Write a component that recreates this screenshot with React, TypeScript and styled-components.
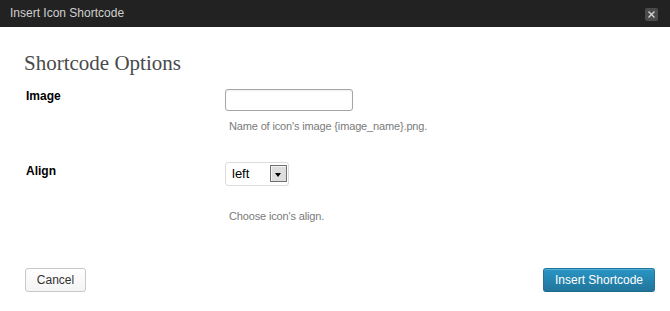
import React from 'react';
import styled, { createGlobalStyle } from 'styled-components';

const GlobalStyle = createGlobalStyle`
  html, body {
    margin: 0;
    padding: 0;
    background: #fff;
  }
  body {
    font-family: "Liberation Sans", Arial, sans-serif;
    color: #333;
  }
`;

const App: React.FC = () => {
    return (
        <>
            <GlobalStyle />
            <Dialog>
                <TitleBar>
                    <Title>Insert Icon Shortcode</Title>
                    <CloseButton aria-label="Close">
                        <svg width="7" height="7" viewBox="0 0 7 7">
                            <path d="M0.5 0.5 L6.5 6.5 M6.5 0.5 L0.5 6.5" stroke="#d4d4d4" strokeWidth="1.4" />
                        </svg>
                    </CloseButton>
                </TitleBar>

                <Content>
                    <Heading>Shortcode Options</Heading>

                    <FieldRow $top={14}>
                        <Label $offset={0}>Image</Label>
                        <Field>
                            <TextInput type="text" />
                            <Description $top={8}>Name of icon's image {'{image_name}'}.png.</Description>
                        </Field>
                    </FieldRow>

                    <FieldRow $top={29}>
                        <Label $offset={2}>Align</Label>
                        <Field>
                            <Select>
                                <SelectValue>left</SelectValue>
                                <SelectArrow />
                            </Select>
                            <Description $top={23}>Choose icon's align.</Description>
                        </Field>
                    </FieldRow>
                </Content>

                <Footer>
                    <Button>Cancel</Button>
                    <PrimaryButton>Insert Shortcode</PrimaryButton>
                </Footer>
            </Dialog>
        </>
    );
};

// Styled Components
const Dialog = styled.div`
  width: 670px;
  height: 311px;
  background: #fff;
  display: flex;
  flex-direction: column;
`;

const TitleBar = styled.div`
  height: 27px;
  background: #222;
  display: flex;
  align-items: center;
  justify-content: space-between;
  padding: 0 12px 0 10px;
`;

const Title = styled.div`
  font-size: 12px;
  line-height: 27px;
  color: #cfcfcf;
`;

const CloseButton = styled.div`
  width: 13px;
  height: 13px;
  margin-top: 1px;
  border-radius: 2px;
  background: #4b4b4b;
  display: flex;
  align-items: center;
  justify-content: center;
`;

const Content = styled.div`
  padding: 0 15px 0 24px;
`;

const Heading = styled.h2`
  margin: 24px 0 0;
  font-family: "Liberation Serif", Georgia, serif;
  font-size: 21px;
  line-height: 24px;
  font-weight: normal;
  color: #4a4a4a;
`;

const FieldRow = styled.div<{ $top: number }>`
  display: grid;
  grid-template-columns: 201px 1fr;
  margin-top: ${p => p.$top}px;
`;

const Label = styled.div<{ $offset: number }>`
  padding-left: 2px;
  margin-top: ${p => p.$offset}px;
  font-size: 12px;
  line-height: 14px;
  font-weight: bold;
  color: #000;
`;

const Field = styled.div`
  display: flex;
  flex-direction: column;
  align-items: flex-start;
`;

const TextInput = styled.input`
  box-sizing: border-box;
  width: 128px;
  height: 22px;
  margin: 0;
  padding: 2px 4px;
  border: 1px solid #a5a5a5;
  border-radius: 3px;
  background: #fff;
  box-shadow: inset 0 1px 2px rgba(0,0,0,0.07);
  font-family: inherit;
  font-size: 12px;
  outline: none;
`;

const Description = styled.div<{ $top: number }>`
  margin-top: ${p => p.$top}px;
  padding-left: 4px;
  font-size: 11px;
  line-height: 14px;
  letter-spacing: -0.15px;
  color: #7a7a7a;
`;

const Select = styled.div`
  box-sizing: border-box;
  width: 64px;
  height: 24px;
  border: 1px solid #dcdcdc;
  border-radius: 3px;
  background: #fff;
  display: flex;
  align-items: center;
  justify-content: space-between;
  padding: 0 1px 1px 6px;
`;

const SelectValue = styled.span`
  font-size: 13px;
  color: #000;
`;

const SelectArrow = styled.span`
  position: relative;
  box-sizing: border-box;
  width: 17px;
  height: 17px;
  border: 1px solid #707070;
  background: #dedede;
  box-shadow: inset 1px 1px 0 #f4f4f4;

  &::after {
    content: '';
    position: absolute;
    left: 4px;
    top: 7px;
    border-left: 3.5px solid transparent;
    border-right: 3.5px solid transparent;
    border-top: 4px solid #000;
  }
`;

const Footer = styled.div`
  margin-top: auto;
  padding: 0 15px 19px 25px;
  display: flex;
  justify-content: space-between;
  align-items: center;
`;

const Button = styled.button`
  box-sizing: border-box;
  height: 24px;
  width: 61px;
  padding: 0 10px;
  border: 1px solid #c8c8c8;
  border-radius: 3px;
  background: linear-gradient(to bottom, #fefefe, #f4f4f4);
  font-family: "Liberation Sans", Arial, sans-serif;
  font-size: 12px;
  color: #333;
  cursor: pointer;
`;

const PrimaryButton = styled(Button)`
  width: 112px;
  border-color: #21759b;
  border-bottom-color: #1e6a8d;
  background: linear-gradient(to bottom, #2a95c5, #21759b);
  box-shadow: inset 0 1px 0 rgba(120,200,230,0.5);
  color: #fff;
`;

export default App;
